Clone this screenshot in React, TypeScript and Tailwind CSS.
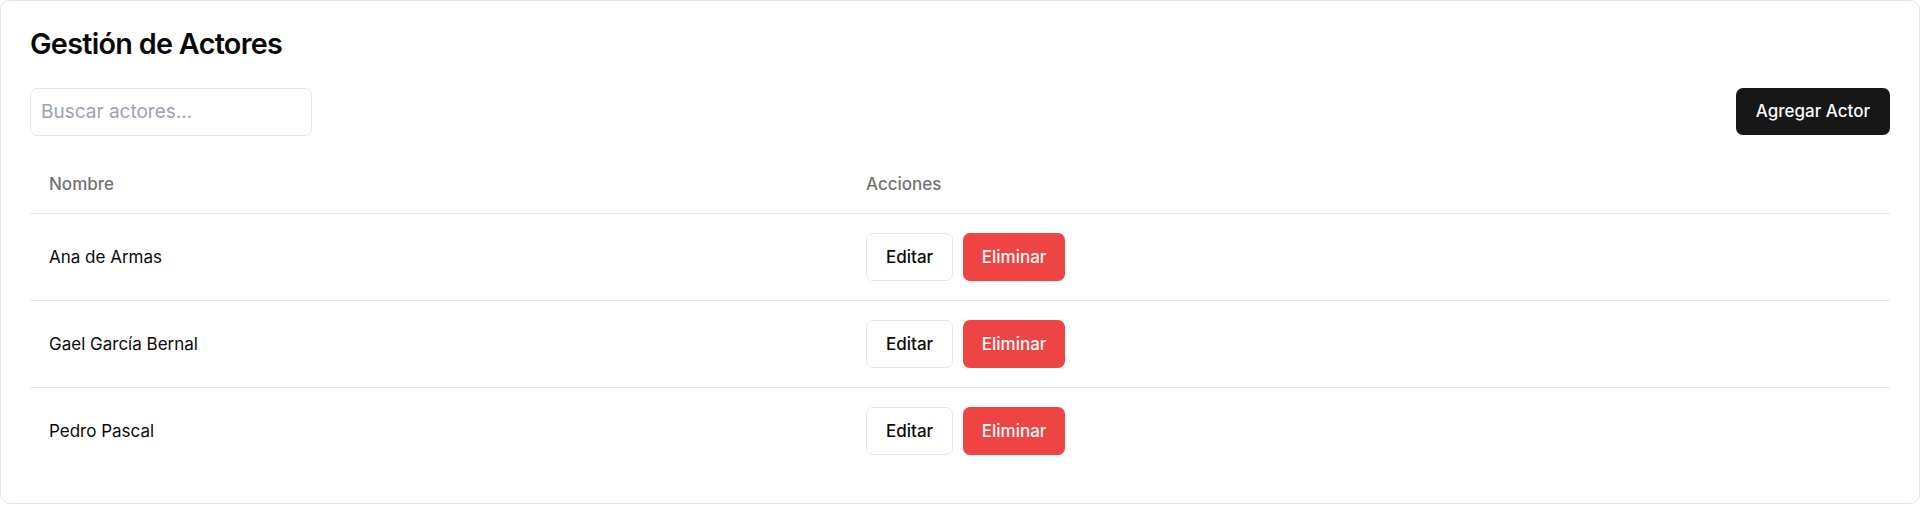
import { useState } from 'react';

interface Actor {
  id: number;
  nombre: string;
}

const ACTORES: Actor[] = [
  { id: 1, nombre: 'Ana de Armas' },
  { id: 2, nombre: 'Gael García Bernal' },
  { id: 3, nombre: 'Pedro Pascal' },
];

export default function App() {
  const [busqueda, setBusqueda] = useState('');

  const actores = ACTORES.filter((a) =>
    a.nombre.toLowerCase().includes(busqueda.toLowerCase())
  );

  return (
    <div className="bg-white font-['Inter','Liberation_Sans',sans-serif] text-[#0a0a0a]">
      <div className="rounded-[10px] border border-[#e5e5e5] bg-white p-[29px]">
        {/* Título */}
        <h1 className="mb-[29px] text-[28.8px] font-semibold leading-none tracking-tight">
          Gestión de Actores
        </h1>

        {/* Barra de búsqueda y acción */}
        <div className="mb-[20px] flex items-center justify-between">
          <input
            type="text"
            value={busqueda}
            onChange={(e) => setBusqueda(e.target.value)}
            placeholder="Buscar actores..."
            className="h-[48px] w-[282px] rounded-[7px] border border-[#e5e5e5] px-[10px] text-[19px] outline-none placeholder:text-[#9ca3af]"
          />
          <button className="h-[47px] rounded-[7px] bg-[#171717] px-[20px] text-[17px] font-medium text-[#fafafa]">
            Agregar Actor
          </button>
        </div>

        {/* Tabla */}
        <table className="w-full border-collapse text-[17px]">
          <thead>
            <tr className="border-b border-[#e5e5e5]">
              <th className="h-[58px] w-[817px] px-[19px] text-left align-middle font-medium text-[#737373]">
                Nombre
              </th>
              <th className="h-[58px] px-[19px] text-left align-middle font-medium text-[#737373]">
                Acciones
              </th>
            </tr>
          </thead>
          <tbody>
            {actores.map((actor) => (
              <tr key={actor.id} className="border-b border-[#e5e5e5] last:border-0">
                <td className="px-[19px] py-[19px] align-middle">{actor.nombre}</td>
                <td className="px-[19px] py-[19px] align-middle">
                  <div className="flex gap-[9.6px]">
                    <button className="h-[48px] rounded-[7px] border border-[#e5e5e5] bg-white px-[19px] font-medium">
                      Editar
                    </button>
                    <button className="h-[48px] rounded-[7px] bg-[#ef4444] px-[19px] font-medium text-[#fafafa]">
                      Eliminar
                    </button>
                  </div>
                </td>
              </tr>
            ))}
          </tbody>
        </table>
      </div>
    </div>
  );
}
